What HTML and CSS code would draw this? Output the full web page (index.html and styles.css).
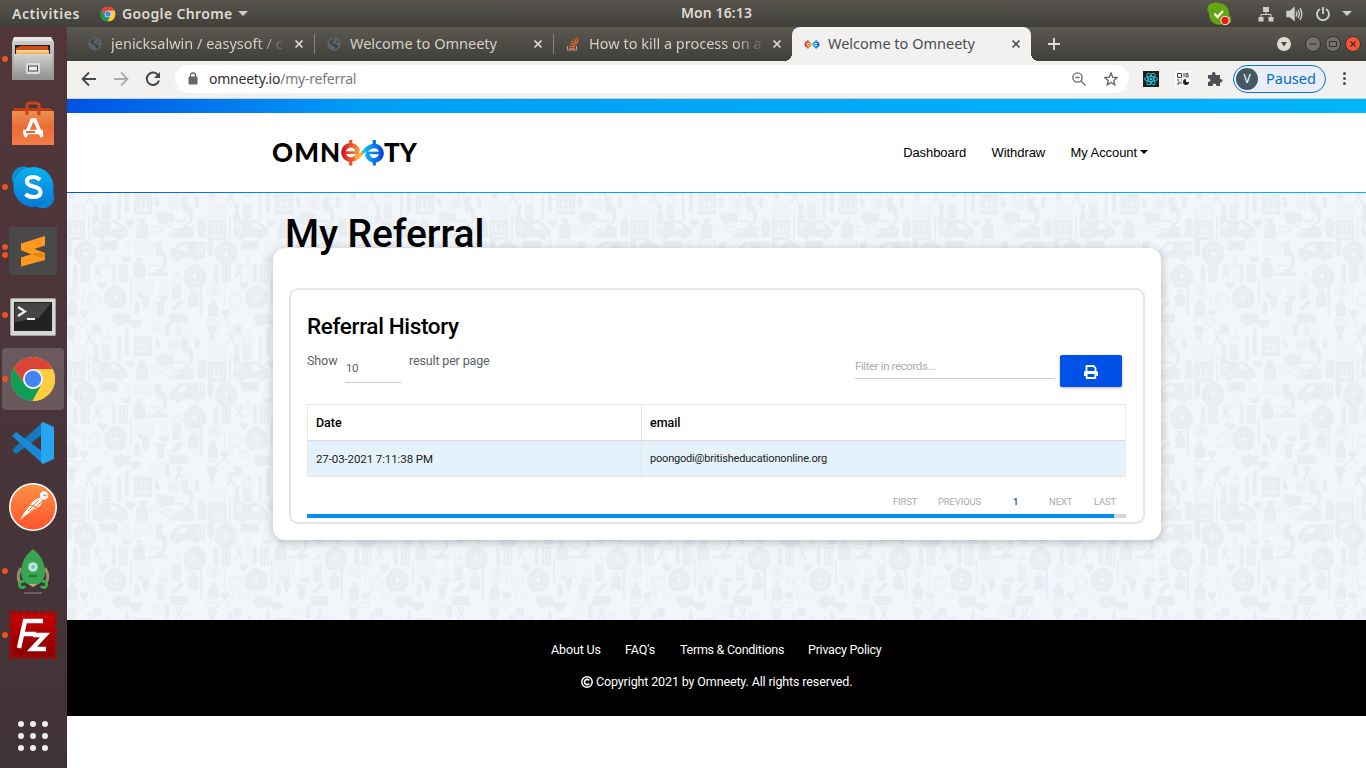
FILE: index.html
```html
<!DOCTYPE html>
<html lang="en">
<head>
<meta charset="utf-8">
<title>Welcome to Omneety</title>
<link rel="stylesheet" href="styles.css">
</head>
<body>
<svg width="0" height="0" class="defs">
  <defs>
    <linearGradient id="warm" gradientUnits="userSpaceOnUse" x1="2" x2="22" y1="0" y2="0"><stop offset="0" stop-color="#d3132a"/><stop offset=".5" stop-color="#ee5c2c"/><stop offset="1" stop-color="#ffae3a"/></linearGradient>
    <linearGradient id="cool" gradientUnits="userSpaceOnUse" x1="22" x2="43" y1="0" y2="0"><stop offset="0" stop-color="#1cc0f2"/><stop offset=".5" stop-color="#0a8af4"/><stop offset="1" stop-color="#0440e2"/></linearGradient>
    <linearGradient id="grey" x2="0" y2="1"><stop offset="0" stop-color="#d2d2d2"/><stop offset="1" stop-color="#929292"/></linearGradient>
    <linearGradient id="bag" x2="0" y2="1"><stop offset="0" stop-color="#e79050"/><stop offset=".5" stop-color="#ee6b37"/><stop offset="1" stop-color="#f27d49"/></linearGradient>
    <linearGradient id="sky" x2="0" y2="1"><stop offset="0" stop-color="#08b5f0"/><stop offset="1" stop-color="#0878d8"/></linearGradient>
    <linearGradient id="post" x2="0" y2="1"><stop offset="0" stop-color="#ff9146"/><stop offset="1" stop-color="#ff5329"/></linearGradient>
    <linearGradient id="red" x2="0" y2="1"><stop offset="0" stop-color="#cc0202"/><stop offset="1" stop-color="#880000"/></linearGradient>
    <symbol id="chrome" viewBox="0 0 48 48">
      <circle cx="24" cy="24" r="22" fill="#fbc93b"/>
      <path d="M24 24 4.900 13A22 22 0 0 1 43.600 14H24z" fill="#db4437"/>
      <path d="M4.900 13A22 22 0 0 0 23.500 46l9.300-16.800L15.400 29z" fill="#0f9d58"/>
      <path d="M24 14a10 10 0 1 0 8.800 15.200L23.500 46A22 22 0 0 0 43.600 14z" fill="#ffcd40"/>
      <path d="M4.900 13 15.400 29 24 24V14z" fill="#db4437"/>
      <circle cx="24" cy="24" r="10" fill="#f3f3f3"/><circle cx="24" cy="24" r="8.200" fill="#4285f4"/>
    </symbol>
    <symbol id="globe" viewBox="0 0 14 14"><circle cx="7" cy="7" r="6.800" fill="#59626b"/><path d="M6 1.500 7.500 3 5 5l2 2 3 .5 1 2-2.500 3L7 9 3 6.500 2 4.500zM9.500 3l2 2-2 1z" fill="#42413b"/></symbol>
    <symbol id="close" viewBox="0 0 10 10"><path d="M1.500 1.500l7 7M8.500 1.500l-7 7" stroke="currentColor" stroke-width="1.700"/></symbol>
    <symbol id="omee" viewBox="0 0 45 26">
      <path d="M17.800 11.500A7.200 7.200 0 1 0 14 18.800Q17 17.500 20 14.500" fill="none" stroke="url(#warm)" stroke-width="4.600"/>
      <path d="M5 12.600H19" fill="none" stroke="url(#warm)" stroke-width="2.600"/>
      <path d="M10.700 0v5M10.700 20.500V25.500" stroke="#e8502e" stroke-width="3.200"/>
      <path d="M27.200 14A7.200 7.200 0 1 0 31 6.700Q28 8 25 11" fill="none" stroke="url(#cool)" stroke-width="4.600"/>
      <path d="M40 12.900H26" fill="none" stroke="url(#cool)" stroke-width="2.600"/>
      <path d="M34.300 0v5M34.300 20.500V25.500" stroke="#0872ee" stroke-width="3.200"/>
      <path d="M15 18.500Q18 17 20.500 14.500L22.500 12.800" fill="none" stroke="#ffad3b" stroke-width="3.200"/>
      <path d="M22.500 12.800L25.500 10" fill="none" stroke="#1fbdf0" stroke-width="3.200"/>
    </symbol>
  </defs>
</svg>

<header class="topbar">
  <span class="activities">Activities</span>
  <svg class="app-icon" width="16" height="16"><use href="#chrome"/></svg>
  <span class="app-name">Google Chrome</span>
  <i class="caret-light"></i>
  <span class="clock">Mon 16:13</span>
  <div class="tray">
    <svg width="24" height="24" viewBox="0 0 24 24"><path d="M6 1a5 5 0 0 1 5 0 10.500 10.500 0 0 1 11 12 5 5 0 0 1-6 9A10.500 10.500 0 0 1 2 11 6 6 0 0 1 6 1z" fill="#62a70f"/><path d="M7.500 11.500l3 3.500 5.500-6" fill="none" stroke="#fff" stroke-width="2.200"/><circle cx="18" cy="18.500" r="4.600" fill="#fff"/><circle cx="18" cy="18.500" r="3.700" fill="#f01818"/></svg>
    <svg class="net" width="16" height="16" viewBox="0 0 16 16" fill="#cfcec9"><path d="M5 1h6v5H5zM.5 11h5v4.500h-5zM10.500 11h5v4.500h-5z"/><path d="M8 6v2.500M3 11V8.500h10V11" stroke="#cfcec9" fill="none"/></svg>
    <svg class="vol" width="17" height="16" viewBox="0 0 17 16" fill="none" stroke="#cfcec9" stroke-width="1.400"><path d="M1 5.500h3L8 2v12l-4-3.500H1z" fill="#cfcec9"/><path d="M10 5.500q1.500 2.500 0 5M12 4q2.500 4 0 8M14 2q3.500 6 0 12"/></svg>
    <svg class="pow" width="16" height="16" viewBox="0 0 16 16" fill="none" stroke="#cfcec9" stroke-width="1.900"><path d="M5 3a6 6 0 1 0 6 0M8 1v7"/></svg>
    <i class="caret-light"></i>
  </div>
</header>

<div class="desktop">
  <nav class="dock">
    <div class="app one"><svg width="48" height="48" viewBox="0 0 48 48"><path d="M5 2h37l3 5v38H3V7z" fill="url(#grey)"/><path d="M5 2h37l2 4H4z" fill="#e6e6e6"/><path d="M6 10h35v10H6z" fill="#222"/><path d="M7 13q4-3 11-2h21v9H7z" fill="#ce4d18"/><path d="M7 15h33v5H7z" fill="#f6b35b"/><path d="M8 16h31" stroke="#fff2d0"/><path d="M5 19h38v24H5z" fill="url(#grey)"/><rect x="17" y="28" width="14" height="11" rx="2" fill="#dedede"/><rect x="19.500" y="31" width="9" height="5" fill="#eee" stroke="#444"/></svg></div>
    <div class="app low"><svg width="48" height="48" viewBox="0 0 48 48"><path d="M5 7h36l4 4H3z" fill="#b83d18"/><path d="M3 10h42v34H3z" fill="url(#bag)"/><path d="M18 14V5q0-3 3-3h6q3 0 3 3v9" fill="none" stroke="#c7451c" stroke-width="3"/><path d="M16 36l7-17h3l7 17" fill="none" stroke="#fff" stroke-width="3.500"/><path d="M14 31h20" stroke="#fff" stroke-width="4.500"/><path d="M17 31h9" stroke="#e9672e" stroke-width="2"/></svg></div>
    <div class="app one"><svg width="48" height="48" viewBox="0 0 48 48"><circle cx="14.500" cy="15" r="11.500" fill="#0a8fd8"/><circle cx="34" cy="34" r="11.200" fill="#0a84d6"/><circle cx="24.500" cy="24" r="20" fill="url(#sky)"/><path d="M31 17q-3-3-7-3-6 0-6 4.500 0 3.500 6.500 5 7 1.500 7 5.500 0 5-7 5-5 0-8-3" fill="none" stroke="#fff" stroke-width="4.200"/></svg></div>
    <div class="app two"><svg width="48" height="48" viewBox="0 0 48 48"><rect width="48" height="48" rx="3" fill="#494949"/><path d="M12 16.500 36 9v9.500L25 22l11 4v7L12 39.500V30.500l11-3.500-11-4z" fill="#ff9820"/><path d="M12 16.500v6.500l24 10v-6.500z" fill="#ff9820"/><path d="M23 27l9-1.500 4 2.500v2l-7 0z" fill="#e5850f"/></svg></div>
    <div class="app one low"><svg width="48" height="48" viewBox="0 0 48 48"><rect x="1.500" y="5.500" width="45" height="37" rx="1" fill="#d6d6d4" stroke="#a3a3a0"/><path d="M5 9h38v29H5z" fill="#222"/><path d="M6 10h36L30 25 6 29z" fill="#454545"/><path d="M9 14l7 4.500L9 23M18 26h8" fill="none" stroke="#eee" stroke-width="2.200"/></svg></div>
    <div class="app one active"><svg width="48" height="48"><use href="#chrome"/></svg></div>
    <div class="app"><svg width="48" height="48" viewBox="0 0 48 48"><path d="M34 3 3 31l4 4L34 15z" fill="#1479bd"/><path d="M34 45 3 17l4-4 27 20z" fill="#1a8ad6"/><path d="M34 3l11 5v32l-11 5-2-2V5z" fill="#26a5f1"/></svg></div>
    <div class="app"><svg width="48" height="48" viewBox="0 0 48 48"><circle cx="24" cy="24" r="23.200" fill="url(#post)" stroke="#fff" stroke-width="1.600"/><circle cx="35" cy="12.500" r="4.200" fill="#fff"/><path d="M31 15q-6 1-9 6l-7 9-4 7 6-5 9-6q7-2 7-10z" fill="#fff"/><path d="M30 17 19 28M32 19 21 29M21 22l8 3M34 12l4 1" stroke="#fa6d38" stroke-width="1"/></svg></div>
    <div class="app one"><svg width="48" height="48" viewBox="0 0 48 48"><path d="M12 21q-5 8-1 15M36 21q5 8 1 15" fill="none" stroke="#a08d6c" stroke-width="3"/><path d="M24 2q12 9 12 23 0 8-6 12H18q-6-4-6-12Q12 11 24 2z" fill="#38a550"/><path d="M19 37h10l-5 3z" fill="#bcae80"/><circle cx="24" cy="20" r="4.800" fill="#c5e9dd" stroke="#79bca6"/><circle cx="24" cy="20" r="2" fill="#6cc6b4"/><path d="M20 29h8" stroke="#17662e" stroke-width="2" stroke-dasharray="1.500 .7"/><path d="M15 35a3 3 0 1 0 1 4M33 35a3 3 0 1 1-1 4" fill="none" stroke="#36ad4d" stroke-width="3"/><path d="M15 46h18" stroke="#777174" stroke-width="1.500"/></svg></div>
    <div class="app one"><svg width="48" height="48" viewBox="0 0 48 48"><rect x="2" y="2" width="44" height="44" fill="url(#red)" stroke="#a80404" stroke-width="4" stroke-dasharray="4.300 3"/><path d="M10 37 16 10h18M13 23h14M24 24h12L23 38h14" fill="none" stroke="#fff" stroke-width="4.500"/></svg></div>
    <div class="grid-btn"><i></i><i></i><i></i><i></i><i></i><i></i><i></i><i></i><i></i></div>
  </nav>

  <main class="browser">
    <div class="tabs">
      <div class="tab"><svg width="14" height="14"><use href="#globe"/></svg><span class="fade">jenicksalwin / easysoft / c</span><svg class="x" width="10" height="10"><use href="#close"/></svg></div>
      <div class="tab"><svg width="14" height="14"><use href="#globe"/></svg><span>Welcome to Omneety</span><svg class="x" width="10" height="10"><use href="#close"/></svg></div>
      <div class="tab last"><svg width="14" height="14" viewBox="0 0 14 14" fill="none"><path d="M1.500 9v4h9V9" stroke="#a9abad"/><path d="M3 11.300h6M3 9l6 .8M4 6.500l5.500 2M5.500 3.800l4.700 3.500M8 1.500l3 5M11 .5l1 5" stroke="#ef6729" stroke-width="1.200"/></svg><span class="fade">How to kill a process on a</span><svg class="x" width="10" height="10"><use href="#close"/></svg></div>
      <div class="tab current"><svg width="16" height="9"><use href="#omee"/></svg><span>Welcome to Omneety</span><svg class="x" width="10" height="10"><use href="#close"/></svg></div>
      <svg class="plus" width="12" height="12" viewBox="0 0 12 12"><path d="M6 0v12M0 6h12" stroke="#e0ded8" stroke-width="1.800"/></svg>
      <div class="win">
        <svg class="menu" width="14" height="14" viewBox="0 0 14 14"><circle cx="7" cy="7" r="7" fill="#dfdbd2"/><path d="M4 5h6L7 9.500z" fill="#45443e"/></svg>
        <svg width="16" height="16" viewBox="0 0 16 16"><circle cx="8" cy="8" r="7.500" fill="#73716b" stroke="#33322e"/><path d="M4.500 8h7" stroke="#34332f"/></svg>
        <svg width="16" height="16" viewBox="0 0 16 16"><circle cx="8" cy="8" r="7.500" fill="#73716b" stroke="#33322e"/><path d="M4.500 5.500h7v5h-7z" fill="none" stroke="#34332f"/></svg>
        <svg width="16" height="16" viewBox="0 0 16 16"><circle cx="8" cy="8" r="7.500" fill="#f1583a" stroke="#45302a"/><path d="M5.500 5.500l5 5m0-5l-5 5" stroke="#5a2115" stroke-width="1.200"/></svg>
      </div>
    </div>
    <div class="toolbar">
      <svg class="nav-i" width="16" height="16" viewBox="0 0 16 16"><path d="M15 8H2M8 1.500 1.500 8 8 14.500" fill="none" stroke="#45484b" stroke-width="1.800"/></svg>
      <svg class="nav-i" width="16" height="16" viewBox="0 0 16 16"><path d="M1 8h13M8 1.500 14.500 8 8 14.500" fill="none" stroke="#acacac" stroke-width="1.800"/></svg>
      <svg class="nav-i" width="16" height="16" viewBox="0 0 16 16"><path d="M13.300 4.500A6.200 6.200 0 1 0 14 9.500" fill="none" stroke="#45484b" stroke-width="2"/><path d="M15 1v6H9z" fill="#45484b"/></svg>
      <div class="omnibox">
        <svg width="10" height="13" viewBox="0 0 10 13"><path d="M1 5h8v7H1z" fill="#666" stroke="#666"/><path d="M2.500 5V3q0-2 2.500-2t2.500 2v2" fill="none" stroke="#666" stroke-width="1.300"/></svg>
        <span class="url">omneety.io<em>/my-referral</em></span>
        <svg class="mag" width="14" height="14" viewBox="0 0 14 14" fill="none" stroke="#6a6d70" stroke-width="1.400"><circle cx="5.500" cy="5.500" r="4.600"/><path d="M9 9l4.500 4.500M3.300 5.500h4.400"/></svg>
        <svg width="14" height="14" viewBox="0 0 14 14"><path d="M7 1l1.700 4.200 4.500.3-3.400 2.900 1 4.500L7 10.500l-3.800 2.400 1-4.500L.8 5.500l4.500-.3z" fill="none" stroke="#5f6368" stroke-width="1.300"/></svg>
      </div>
      <svg class="ext react" width="16" height="16" viewBox="0 0 16 16"><path d="M0 0h16v16H0z" fill="#1d1e1f"/><g fill="none" stroke="#23c3e0" stroke-width="1"><ellipse cx="8" cy="8" rx="6.500" ry="2.500"/><ellipse cx="8" cy="8" rx="6.500" ry="2.500" transform="rotate(60 8 8)"/><ellipse cx="8" cy="8" rx="6.500" ry="2.500" transform="rotate(120 8 8)"/></g><circle cx="8" cy="8" r="1.300" fill="#23c3e0"/></svg>
      <svg class="ext" width="16" height="16" viewBox="0 0 16 16"><path d="M0 0h16v16H0z" fill="#fafafa"/><path d="M2.500 2.500h4v4h-4zM9 2v4M11 2.500h2v3.500h-2zM2 9h2m2 0h1M4 10v3M2 13h2m2-2v2" fill="none" stroke="#444"/><path d="M11 8a3 3 0 1 0 3 3h-3z" fill="#222"/></svg>
      <svg class="ext" width="16" height="16" viewBox="0 0 16 16"><path d="M1 4h4q-.5-3 1.700-3T8.500 4H13v4q2.500-.2 2.500 1.800T13 11.500V15H9.500q0-2.500-2-2.500T5.500 15H1v-4q2.500 0 2.500-1.800T1 7.500z" fill="#4d4f52"/></svg>
      <div class="profile"><b>V</b><span>Paused</span></div>
      <div class="dots"><i></i><i></i><i></i></div>
    </div>

    <div class="page">
      <div class="stripe"></div>
      <header class="site-head">
        <div class="logo"><span class="omn">OMN</span><svg width="45" height="26"><use href="#omee"/></svg><span class="ty">TY</span></div>
        <nav class="menu-links"><a>Dashboard</a><a>Withdraw</a><a class="acct">My Account<i></i></a></nav>
      </header>
      <section class="hero">
        <svg class="wall" width="1299" height="427">
          <defs>
            <symbol id="kit" viewBox="0 0 68 74"><path d="M24 9V2h20v7M17 8h34l15 18v28L52 71H16L2 54V26z" fill="#e8edf2" stroke="#e8edf2" stroke-width="2"/><circle cx="34" cy="40" r="18" fill="none" stroke="#f2f6fa" stroke-width="2"/><path d="M34 31v18M25 40h18" stroke="#f2f6fa" stroke-width="6"/></symbol>
            <symbol id="van" viewBox="0 0 110 62"><path d="M3 5h73l25 22 7 6v21H3z"/><circle cx="28" cy="53" r="11" stroke="#f2f6fa" stroke-width="2"/><circle cx="84" cy="53" r="11" stroke="#f2f6fa" stroke-width="2"/><path d="M58 14h16l16 17H58z" fill="#f2f6fa"/><circle cx="17" cy="22" r="10" fill="#f2f6fa"/><path d="M17 16v12M11 22h12" stroke="#e8edf2" stroke-width="4"/></symbol>
            <symbol id="jar" viewBox="0 0 40 62"><path d="M10 0h20v9H10zM13 10h14v4l11 8v36q0 3-4 3H6q-4 0-4-3V22l11-8z"/></symbol>
            <symbol id="scope" viewBox="0 0 66 112"><path d="M28 5 44 0l4 12-4 5 4 28-16 6-9-37zM46 27q19 12 15 37-3 19-18 24l20 8v10H2v-8h24l8-12q18-5 16-26L42 42zM8 72h30v6H8z"/></symbol>
            <symbol id="hand" viewBox="0 0 60 46"><path d="M2 2l18 8 12-6 10 7 17-2v28l-18 1-12 7-19-4 9-6L2 32l10-3L1 21l12-2L2 10l14 3z"/></symbol>
            <symbol id="atom" viewBox="0 0 50 50"><g fill="none" stroke="#e8edf2" stroke-width="2.500"><ellipse cx="25" cy="25" rx="23" ry="8"/><ellipse cx="25" cy="25" rx="23" ry="8" transform="rotate(60 25 25)"/><ellipse cx="25" cy="25" rx="23" ry="8" transform="rotate(120 25 25)"/></g><circle cx="25" cy="25" r="5"/></symbol>
            <symbol id="ribbon" viewBox="0 0 28 42"><path d="M3 41 20 12Q22 3 14 3T8 12l17 29" fill="none" stroke="#e8edf2" stroke-width="6"/></symbol>
            <symbol id="heart" viewBox="0 0 30 28"><path d="M15 27 2 13Q-1 4 7 1q6 0 8 5 2-5 8-5 8 3 5 12z"/></symbol>
            <symbol id="grid" viewBox="0 0 56 46"><path d="M1 1h54v44H1z" fill="none" stroke="#e8edf2" stroke-width="2"/><path d="M6 9h44M8 18h44M6 28h44M8 37h44" stroke="#e8edf2" stroke-width="5" stroke-dasharray="5 5"/></symbol>
            <symbol id="hosp" viewBox="0 0 56 60"><path d="M0 0h56v60H0z"/><path d="M8 12h40v38H8z" fill="none" stroke="#f2f6fa" stroke-width="2"/><path d="M20 18v22M36 18v22M20 29h16M12 46h32" stroke="#f2f6fa" stroke-width="5"/></symbol>
            <symbol id="specs" viewBox="0 0 68 28"><g fill="none" stroke="#e8edf2" stroke-width="3"><ellipse cx="17" cy="16" rx="15" ry="10"/><ellipse cx="51" cy="16" rx="15" ry="10"/><path d="M31 12q3-3 6 0M2 10 10 2M66 10l-8-8"/></g></symbol>
            <symbol id="flask" viewBox="0 0 34 66"><path d="M10 0h14M12 2v34q-10 5-10 15 0 13 15 13t15-13q0-10-10-15V2" fill="none" stroke="#e8edf2" stroke-width="2"/><path d="M3 48h28q0 15-14 15T3 48z"/></symbol>
            <symbol id="phone" viewBox="0 0 28 84"><path d="M16 2h5v10h5v71H2V12h14z"/><path d="M5 17h18v17H5zM6 40h16M6 50h16M6 60h16M6 70h16" fill="#f2f6fa" stroke="#f2f6fa" stroke-width="4" stroke-dasharray="4 2"/></symbol>
            <symbol id="pack" viewBox="0 0 28 58"><path d="M0 0h28v58H0z"/><path d="M8 5v50M20 5v50" stroke="#f2f6fa" stroke-width="5" stroke-dasharray="7 5"/></symbol>
            <pattern id="tile" width="423" height="424" patternUnits="userSpaceOnUse" patternTransform="translate(-2 47) scale(.3333)">
              <g fill="#e8edf2">
                <path d="M4 14q0-14 9-14t9 14v26q-9 16-18 0zM104 2h54v28h-54zM140 88q0-16 6-20 6 4 6 20v38h-12zM23 92q0-16 6-20 8 4 8 20v36H23zM195 110h5v78h-5zM220 172h14q2-12-7-17-8 6-7 17zM232 166h20v28l-6 4v10h-8v-10l-6-4zM208 192l8-12 8 12v30h-16zM270 185h32v7h-4l-3 38h-17l-4-38h-4zM314 220h54v28h-54zM404 130h7v96h-7z"/>
                <path d="M320 204l26-25q11 2 8 12l-26 23q-11 0-8-10zM194 240h38q0 21-19 25-18-5-19-25zM219 240l15-16M4 260q12-8 28 0 5 14-4 20l-3 32-6-16-6 16-3-32q-8-8-6-20zM82 255h27q0 18-6 34l-7-12-7 12q-7-16-7-34zM273 292q18 26 8 34-18-2-8-34zM300 248h14v38h-14zM159 285h8v78h-8zM184 260h4l4 22v60h-12v-60zM82 315h21l-7 20 7 20v12H82v-12l7-20zM390 295h13v32h-13zM310 412q20-20 76-12v18h-76zM70 350h5v73h-5zM400 360h20v10l4 6v40h-26v-40l2-6z"/>
                <use href="#kit" x="26" width="68" height="74"/><use href="#kit" x="355" y="70" width="68" height="74"/><use href="#kit" x="117" y="134" width="68" height="74"/>
                <use href="#van" x="-423" y="0" width="110" height="62" transform="scale(-1 1)"/><use href="#van" x="80" y="360" width="110" height="62"/>
                <use href="#jar" x="203" y="52" width="40" height="65"/><use href="#jar" x="4" y="178" width="34" height="54"/><use href="#jar" x="368" y="147" width="34" height="56"/><use href="#jar" x="212" y="358" width="40" height="64"/>
                <use href="#scope" x="245" y="2" width="66" height="112"/><use href="#scope" x="324" y="292" width="66" height="112"/>
                <use href="#hand" x="136" y="213" width="60" height="46"/><use href="#hand" x="268" y="334" width="60" height="46"/>
                <use href="#atom" x="1" y="126" width="48" height="48"/><use href="#atom" x="300" y="290" width="50" height="50"/>
                <use href="#ribbon" x="84" y="70" width="28" height="42"/><use href="#ribbon" x="328" y="252" width="28" height="42"/><use href="#ribbon" x="60" y="272" width="28" height="42"/>
                <use href="#heart" x="98" y="122" width="30" height="28"/><use href="#heart" x="42" y="207" width="30" height="28"/><use href="#heart" x="180" y="360" width="30" height="28"/>
                <use href="#grid" x="208" y="0" width="56" height="42"/><use href="#grid" x="208" y="120" width="56" height="46"/><use href="#grid" x="4" y="318" width="56" height="44"/><use href="#grid" x="254" y="240" width="42" height="42"/>
                <use href="#hosp" x="206" y="286" width="56" height="60"/><use href="#hosp" x="4" y="364" width="56" height="60"/>
                <use href="#specs" x="2" y="232" width="68" height="28"/><use href="#specs" x="256" y="378" width="68" height="28"/>
                <use href="#flask" x="167" y="2" width="34" height="66"/><use href="#flask" x="279" y="118" width="34" height="66"/>
                <use href="#phone" x="320" y="92" width="28" height="84"/><use href="#phone" x="110" y="278" width="28" height="84"/>
                <use href="#pack" x="46" y="72" width="28" height="58"/><use href="#pack" x="162" y="72" width="28" height="58"/>
                <g fill="none" stroke="#e8edf2" stroke-width="2.500"><circle cx="88" cy="178" r="20"/><circle cx="88" cy="178" r="14"/><path d="M70 190q10 20 16 44M55 140v60M118 40l13 30M134 40l-13 30"/><circle cx="118" cy="78" r="6"/><circle cx="134" cy="78" r="6"/><ellipse cx="114" cy="220" rx="16" ry="8"/><ellipse cx="377" cy="278" rx="17" ry="8"/><circle cx="377" cy="278" r="3"/></g>
              </g>
            </pattern>
          </defs>
          <rect width="1299" height="427" fill="url(#tile)"/>
        </svg>
        <div class="wrap">
          <h1>My Referral</h1>
          <div class="card">
            <div class="panel">
              <h2>Referral History</h2>
              <div class="controls">
                <span class="show">Show</span><span class="count">10</span><span class="rpp">result per page</span>
                <span class="filter">Filter in records...</span>
                <button class="print"><svg width="16" height="14" viewBox="0 0 16 14"><path d="M3.500 6V1h7l2 2v3" fill="none" stroke="#fff" stroke-width="1.800"/><path d="M1 11V7.500Q1 6 2.500 6h11Q15 6 15 7.500V11h-2V9H3v2z" fill="#fff"/><path d="M3.700 8.500V13h8.600V8.500" fill="none" stroke="#fff" stroke-width="1.800"/></svg></button>
              </div>
              <div class="table">
                <div class="row th"><span>Date</span><span>email</span></div>
                <div class="row td"><span class="date">27-03-2021 7:11:38 PM</span><span class="mail">poongodi@britisheducationonline.org</span></div>
              </div>
              <div class="pager"><span class="p1">FIRST</span><span class="p2">PREVIOUS</span><span class="p3">1</span><span class="p4">NEXT</span><span class="p5">LAST</span></div>
              <div class="progress"><i></i></div>
            </div>
          </div>
        </div>
      </section>
      <footer class="foot">
        <div class="links"><a class="f1">About Us</a><a class="f2">FAQ's</a><a class="f3">Terms &amp; Conditions</a><a class="f4">Privacy Policy</a></div>
        <div class="copy"><svg width="12" height="12" viewBox="0 0 12 12" fill="none" stroke="#fff"><circle cx="6" cy="6" r="5.200" stroke-width="1.500"/><path d="M8.200 4.500a2.600 2.600 0 1 0 0 3" stroke-width="1.600"/></svg><span>Copyright 2021 by Omneety. All rights reserved.</span></div>
      </footer>
    </div>
  </main>
</div>
</body>
</html>
```
FILE: styles.css
```css
* { box-sizing: border-box; }
body { margin: 0; width: 1366px; height: 768px; overflow: hidden; background: #fff; font-family: "Noto Sans", "Open Sans", sans-serif; white-space: nowrap; }
svg { flex: none; display: block; }
.defs { position: absolute; }
.topbar { position: relative; height: 27px; display: flex; align-items: center; background: linear-gradient(#57554d, #403f3a); color: #dfdbd2; font-size: 14px; font-weight: 600; padding-left: 12px; }
.activities { width: 88px; letter-spacing: .55px; }
.app-icon { margin-right: 6px; }
.app-name { width: 116px; letter-spacing: .35px; }
.caret-light { border: 5px solid transparent; border-top-color: #cfcec9; border-bottom: 0; }
.clock { margin-left: 433px; width: 80px; letter-spacing: .1px; line-height: 18px; padding-bottom: 1px; }
.tray { margin-left: auto; display: flex; align-items: center; padding-right: 14px; }
.net { margin-left: 27px; }
.vol { margin-left: 12px; }
.pow { margin: 0 11px 0 12px; }

.desktop { display: flex; height: 741px; }
.dock { width: 67px; flex: none; display: flex; flex-direction: column; background: linear-gradient(#523639, #49353a 50%, #403337); }
.app { position: relative; height: 64px; display: flex; align-items: center; padding-left: 9px; }
.app.low svg { margin-top: 3px; }
.app.active::after { content: ""; position: absolute; left: 2px; top: 1px; width: 62px; height: 62px; border-radius: 4px; background: rgba(255,255,255,.18); }
.app svg { position: relative; z-index: 1; }
.one::before, .two::before { content: ""; position: absolute; z-index: 2; left: 2px; top: 29px; width: 6px; height: 6px; border-radius: 50%; background: #e95420; }
.two::before { top: 25px; box-shadow: 0 8px #e95420; }
.grid-btn { margin: auto 0 17px 18px; display: grid; grid-template-columns: repeat(3, 6px); gap: 6px; }
.grid-btn i { height: 6px; border-radius: 50%; background: #eee; }

.browser { flex: 1; min-width: 0; }
.tabs { height: 34px; display: flex; align-items: center; padding-left: 8px; background: linear-gradient(#5b5850, #403f3a); color: #d3d0c8; font-size: 14.500px; }
.tab { width: 239px; height: 34px; display: flex; align-items: center; padding: 0 10px 0 13px; position: relative; }
.tab span { margin-left: 9px; flex: 1; line-height: 22px; padding-bottom: 2px; }
.tab .x { color: #e0ded8; }
.tab:not(.last):not(.current)::after { content: ""; position: absolute; right: -1px; top: 7px; width: 1px; height: 20px; background: #85827a; }
.tab .fade { width: 178px; flex: none; margin-right: 5px; -webkit-mask-image: linear-gradient(90deg, #000 145px, transparent 177px); mask-image: linear-gradient(90deg, #000 145px, transparent 177px); }
.tab.current { background: #f2f1f0; color: #4a4d50; border-radius: 8px 8px 0 0; padding-left: 12px; }
.tab.current span { margin-left: 8px; }
.tab.current .x { color: #4a4d50; }
.tab.current::before, .tab.current::after { content: ""; position: absolute; bottom: 0; width: 8px; height: 8px; }
.tab.current::before { left: -8px; background: radial-gradient(circle at 0 0, transparent 8px, #f2f1f0 8px); }
.tab.current::after { right: -8px; background: radial-gradient(circle at 100% 0, transparent 8px, #f2f1f0 8px); }
.plus { margin-left: 17px; }
.win { margin-left: auto; display: flex; align-items: center; gap: 4px; padding-right: 5px; }
.win .menu { margin-right: 10px; }

.toolbar { height: 38px; display: flex; align-items: center; background: #f2f1f0; padding: 0 0 2px 14px; border-bottom: 1px solid #cfcecd; }
.nav-i { margin-right: 16px; }
.omnibox { width: 954px; height: 28px; border-radius: 14px; margin-left: -2px; background: #fff; display: flex; align-items: center; padding: 0 11px 0 13px; }
.url { margin-left: 11px; flex: 1; font-size: 14px; line-height: 20px; color: #303133; letter-spacing: -.23px; }
.url em { font-style: normal; color: #777a7d; }
.mag { margin-right: 18px; }
.ext { margin-right: 16px; }
.react { margin-left: 14px; }
.profile { margin-left: -6px; width: 93px; height: 28px; border: 1px solid #0b70c8; border-radius: 14px; background: #e8eef8; display: flex; align-items: center; padding-left: 2px; color: #0a6cc5; font-size: 14.500px; line-height: 20px; }
.profile span { padding-bottom: 1px; }
.profile b { width: 22px; height: 22px; border-radius: 50%; background: #425863; color: #fff; font-size: 12px; font-weight: 400; line-height: 22px; text-align: center; margin-right: 8px; }
.dots { margin-left: 17px; display: grid; gap: 2px; }
.dots i { width: 3px; height: 3px; border-radius: 50%; background: #4d4f52; }

.page { height: 669px; background: #fff; font-family: Roboto, sans-serif; }
.stripe { height: 14px; background: linear-gradient(90deg, #0052e6, #009ff5 23%, #00b5fa); }
.site-head { height: 80px; display: flex; align-items: center; padding: 0 218px 0 205px; border-bottom: 1px solid; border-image: linear-gradient(90deg, #0052e6, #009ff5 23%, #00b5fa) 1; }
.logo { display: flex; align-items: center; color: #000; font: 900 26px/26px Lato, sans-serif; }
.logo span { padding-bottom: 1px; }
.omn { width: 68px; letter-spacing: 1.100px; }
.ty { margin-left: -1px; }
.menu-links { margin-left: auto; display: flex; gap: 25.500px; font: 13px/16px "Liberation Sans", sans-serif; letter-spacing: -.08px; color: #000; }
.acct i { display: inline-block; border: 4px solid transparent; border-top-color: #000; border-bottom: 0; margin-left: 3px; vertical-align: 3px; }
.hero { position: relative; height: 427px; padding: 21px 205px 0 206px; background: #f2f6fa; }
.wall { position: absolute; left: 0; top: 0; }
.wrap { position: relative; }
h1 { position: relative; z-index: 1; margin: 0 0 -6px 12px; font-size: 39px; line-height: 40px; font-weight: 500; color: #000; letter-spacing: -.1px; }
.card { width: 888px; height: 292px; padding: 40px 16px 0; border-radius: 12px; background: #fff; box-shadow: 0 2px 10px rgba(0,0,0,.25); }
.panel { height: 236px; border: 2px solid #e5e5e5; border-radius: 9px; padding: 24px 17px 0 16px; }
h2 { margin: 0; font-size: 22.500px; line-height: 24px; font-weight: 500; color: #000; letter-spacing: -.35px; }
.controls { display: flex; height: 66px; padding-top: 15px; font-size: 12.500px; line-height: 16px; color: #5a6268; margin-right: 4px; }
.show { width: 38px; letter-spacing: -.1px; }
.rpp { letter-spacing: -.15px; }
.count { width: 56px; height: 30px; padding: 7px 1px; margin-right: 8px; border-bottom: 1px solid #ccc; font-size: 11.500px; letter-spacing: -.5px; }
.filter { margin: 0 5px 0 auto; width: 200px; height: 26px; padding-top: 5px; border-bottom: 1px solid #ccc; font-size: 11.500px; letter-spacing: -.4px; color: #adadad; }
.print { margin-top: 2px; width: 62px; height: 32px; border: 0; border-radius: 2px; background: #0052e6; padding: 2px 0 0 23px; box-shadow: 0 1px 3px rgba(120,0,80,.35); }
.table { border: 1px solid #e7e9ea; height: 73px; }
.row { display: flex; color: #000; }
.row span { padding-left: 8px; }
.row span:first-child { width: 334px; border-right: 1px solid #dfe4e8; }
.th { height: 35px; line-height: 35px; font-size: 12.500px; font-weight: 500; letter-spacing: -.05px; }
.td { height: 36px; line-height: 36px; background: #e5f2fc; border-top: 1px solid #d0dfe9; font-size: 11.500px; color: #1b1b1b; }
.date { letter-spacing: -.1px; }
.mail { font-size: 11px; letter-spacing: -.19px; }
.pager { display: flex; height: 37px; padding: 17px 0 0 586px; font-size: 9.500px; line-height: 16px; letter-spacing: -.15px; color: #aaa; }
.p1 { width: 45px; } .p2 { width: 75px; } .p3 { width: 36px; color: #10527f; font-weight: 500; } .p4 { width: 45px; }
.progress { height: 4px; background: #d5d5d5; }
.progress i { display: block; width: 807px; height: 4px; background: #008df0; }
.foot { height: 96px; background: #000; color: #fff; padding-top: 22px; font-size: 12.500px; line-height: 16px; letter-spacing: -.13px; }
.links { display: flex; padding-left: 484px; }
.f1 { width: 74px; } .f2 { width: 55px; } .f3 { width: 128px; letter-spacing: -.27px; } .f4 { letter-spacing: -.25px; }
.copy { display: flex; align-items: center; gap: 3px; padding: 16px 0 0 514px; }
```
